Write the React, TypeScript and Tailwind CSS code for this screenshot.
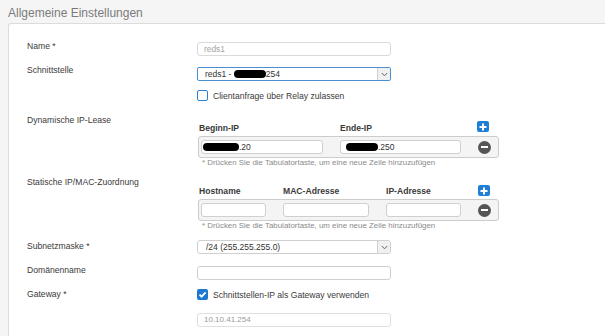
import React from "react";

function Plus() {
  return (
    <div className="w-[12px] h-[11px] rounded-[2px] bg-[#1f7fd4] flex items-center justify-center">
      <svg width="8" height="8" viewBox="0 0 8 8">
        <path d="M4 0.5v7M0.5 4h7" stroke="white" strokeWidth="2" />
      </svg>
    </div>
  );
}

function Minus() {
  return (
    <div className="w-[13px] h-[13px] rounded-full bg-[#555555] flex items-center justify-center">
      <div className="w-[7px] h-[2px] bg-white" />
    </div>
  );
}

function Chevron() {
  return (
    <div className="w-[13px] h-full border-l border-[#cfcfcf] bg-[#f0f0f0] flex items-center justify-center rounded-r-[2px]">
      <svg width="7" height="5" viewBox="0 0 7 5">
        <path d="M0.8 1L3.5 3.8L6.2 1" stroke="#666" strokeWidth="1" fill="none" />
      </svg>
    </div>
  );
}

function Blob({ cls }: { cls: string }) {
  return <span className={"inline-block h-[8px] bg-black rounded-full " + cls} />;
}

export default function App() {
  return (
    <div className="w-[605px] h-[336px] overflow-hidden bg-[#f5f5f5] font-['Liberation_Sans',Arial,sans-serif] text-[8.6px] text-[#3a3a3a]">
      <div className="h-[23px] pl-[8px] pt-[4.5px] text-[12px] leading-[16px] text-[#7b7b7b]">
        Allgemeine Einstellungen
      </div>
      <div className="ml-[8px] h-[313px] border-l border-t border-[#dcdcdc] rounded-tl-[3px] bg-white pl-[18px]">
        {/* Name */}
        <div className="flex mt-[16px]">
          <div className="w-[170px] leading-[12px]">Name *</div>
          <div className="mt-[2px] w-[194px] h-[14px] border border-[#dadada] rounded-[3px] pl-[6px] flex items-center text-[8.4px] text-[#a5a5a5]">
            reds1
          </div>
        </div>
        {/* Schnittstelle */}
        <div className="flex mt-[8px]">
          <div className="w-[170px] leading-[12px]">Schnittstelle</div>
          <div className="mt-[3px] w-[194px] h-[14px] border border-[#4a8fd3] rounded-[2px] flex items-stretch text-[8.5px] text-[#333]">
            <div className="flex-1 pl-[7px] flex items-center whitespace-pre">
              reds1 - <Blob cls="w-[32px]" />254
            </div>
            <Chevron />
          </div>
        </div>
        {/* Checkbox */}
        <div className="flex mt-[9px]">
          <div className="w-[170px]" />
          <div className="flex items-center h-[11px]">
            <div className="w-[11px] h-[11px] border-[1.5px] border-[#2f7fd2] rounded-[2px]" />
            <span className="ml-[5px] leading-[12px]">Clientanfrage über Relay zulassen</span>
          </div>
        </div>
        {/* Dynamische IP-Lease */}
        <div className="flex mt-[13px]">
          <div className="w-[170px] leading-[12px]">Dynamische IP-Lease</div>
          <div className="pt-[7px] w-[302px]">
            <div className="flex items-start h-[13px] pl-[2px]">
              <div className="w-[141px] pt-[1px] leading-[12px] font-bold">Beginn-IP</div>
              <div className="w-[137px] pt-[1px] leading-[12px] font-bold">Ende-IP</div>
              <Plus />
            </div>
            <div className="mt-[2px] ml-[1px] h-[22px] w-[301px] border border-[#cccccc] rounded-[3px] bg-[#f4f4f4] flex items-center pl-[2px]">
              <div className="w-[122px] h-[14px] border border-[#cfcfcf] rounded-[3px] bg-white flex items-center text-[8.5px] text-[#333]">
                <Blob cls="w-[36px] ml-[1px]" />.20
              </div>
              <div className="ml-[17px] w-[121px] h-[14px] border border-[#cfcfcf] rounded-[3px] bg-white flex items-center pl-[5px] text-[8.5px] text-[#333]">
                <Blob cls="w-[32px]" />.250
              </div>
              <div className="ml-[17px]">
                <Minus />
              </div>
            </div>
            <div className="ml-[5px] leading-[10px] text-[7.9px] text-[#8a8a8a]">
              * Drücken Sie die Tabulatortaste, um eine neue Zeile hinzuzufügen
            </div>
          </div>
        </div>
        {/* Statische IP/MAC */}
        <div className="flex mt-[8px]">
          <div className="w-[170px] leading-[12px]">Statische IP/MAC-Zuordnung</div>
          <div className="pt-[8px] w-[302px]">
            <div className="flex items-start h-[13px] pl-[2px]">
              <div className="w-[84px] pt-[1px] leading-[12px] font-bold">Hostname</div>
              <div className="w-[103px] pt-[1px] leading-[12px] font-bold">MAC-Adresse</div>
              <div className="w-[92px] pt-[1px] leading-[12px] font-bold">IP-Adresse</div>
              <div className="pt-[1px]">
                <Plus />
              </div>
            </div>
            <div className="mt-[2px] ml-[1px] h-[22px] w-[301px] border border-[#cccccc] rounded-[3px] bg-[#f4f4f4] flex items-center pl-[2px]">
              <div className="w-[65px] h-[14px] border border-[#cfcfcf] rounded-[3px] bg-white" />
              <div className="ml-[17px] w-[86px] h-[14px] border border-[#cfcfcf] rounded-[3px] bg-white" />
              <div className="ml-[17px] w-[75px] h-[14px] border border-[#cfcfcf] rounded-[3px] bg-white" />
              <div className="ml-[17px]">
                <Minus />
              </div>
            </div>
            <div className="ml-[5px] leading-[10px] text-[7.9px] text-[#8a8a8a]">
              * Drücken Sie die Tabulatortaste, um eine neue Zeile hinzuzufügen
            </div>
          </div>
        </div>
        {/* Subnetzmaske */}
        <div className="flex mt-[9px]">
          <div className="w-[170px] leading-[12px]">Subnetzmaske *</div>
          <div className="w-[194px] h-[14px] border border-[#cfcfcf] rounded-[3px] flex items-stretch text-[8.5px] text-[#333]">
            <div className="flex-1 pl-[8px] flex items-center">/24 (255.255.255.0)</div>
            <Chevron />
          </div>
        </div>
        {/* Domänenname */}
        <div className="flex mt-[10px]">
          <div className="w-[170px] leading-[12px]">Domänenname</div>
          <div className="mt-[2px] w-[194px] h-[14px] border border-[#cfcfcf] rounded-[3px]" />
        </div>
        {/* Gateway */}
        <div className="flex mt-[8px]">
          <div className="w-[170px] leading-[12px]">Gateway *</div>
          <div className="mt-[1px] flex items-center h-[11px]">
            <div className="w-[11px] h-[11px] bg-[#1d78d0] rounded-[2px] flex items-center justify-center">
              <svg width="9" height="9" viewBox="0 0 9 9">
                <path d="M1.5 4.6L3.6 6.7L7.6 2.3" stroke="white" strokeWidth="1.8" fill="none" />
              </svg>
            </div>
            <span className="ml-[5px] leading-[12px]">Schnittstellen-IP als Gateway verwenden</span>
          </div>
        </div>
        <div className="ml-[170px] mt-[13px] w-[194px] h-[14px] border border-[#e0e0e0] rounded-[3px] pl-[6px] flex items-center text-[8px] text-[#9a9a9a]">
          10.10.41.254
        </div>
      </div>
    </div>
  );
}
